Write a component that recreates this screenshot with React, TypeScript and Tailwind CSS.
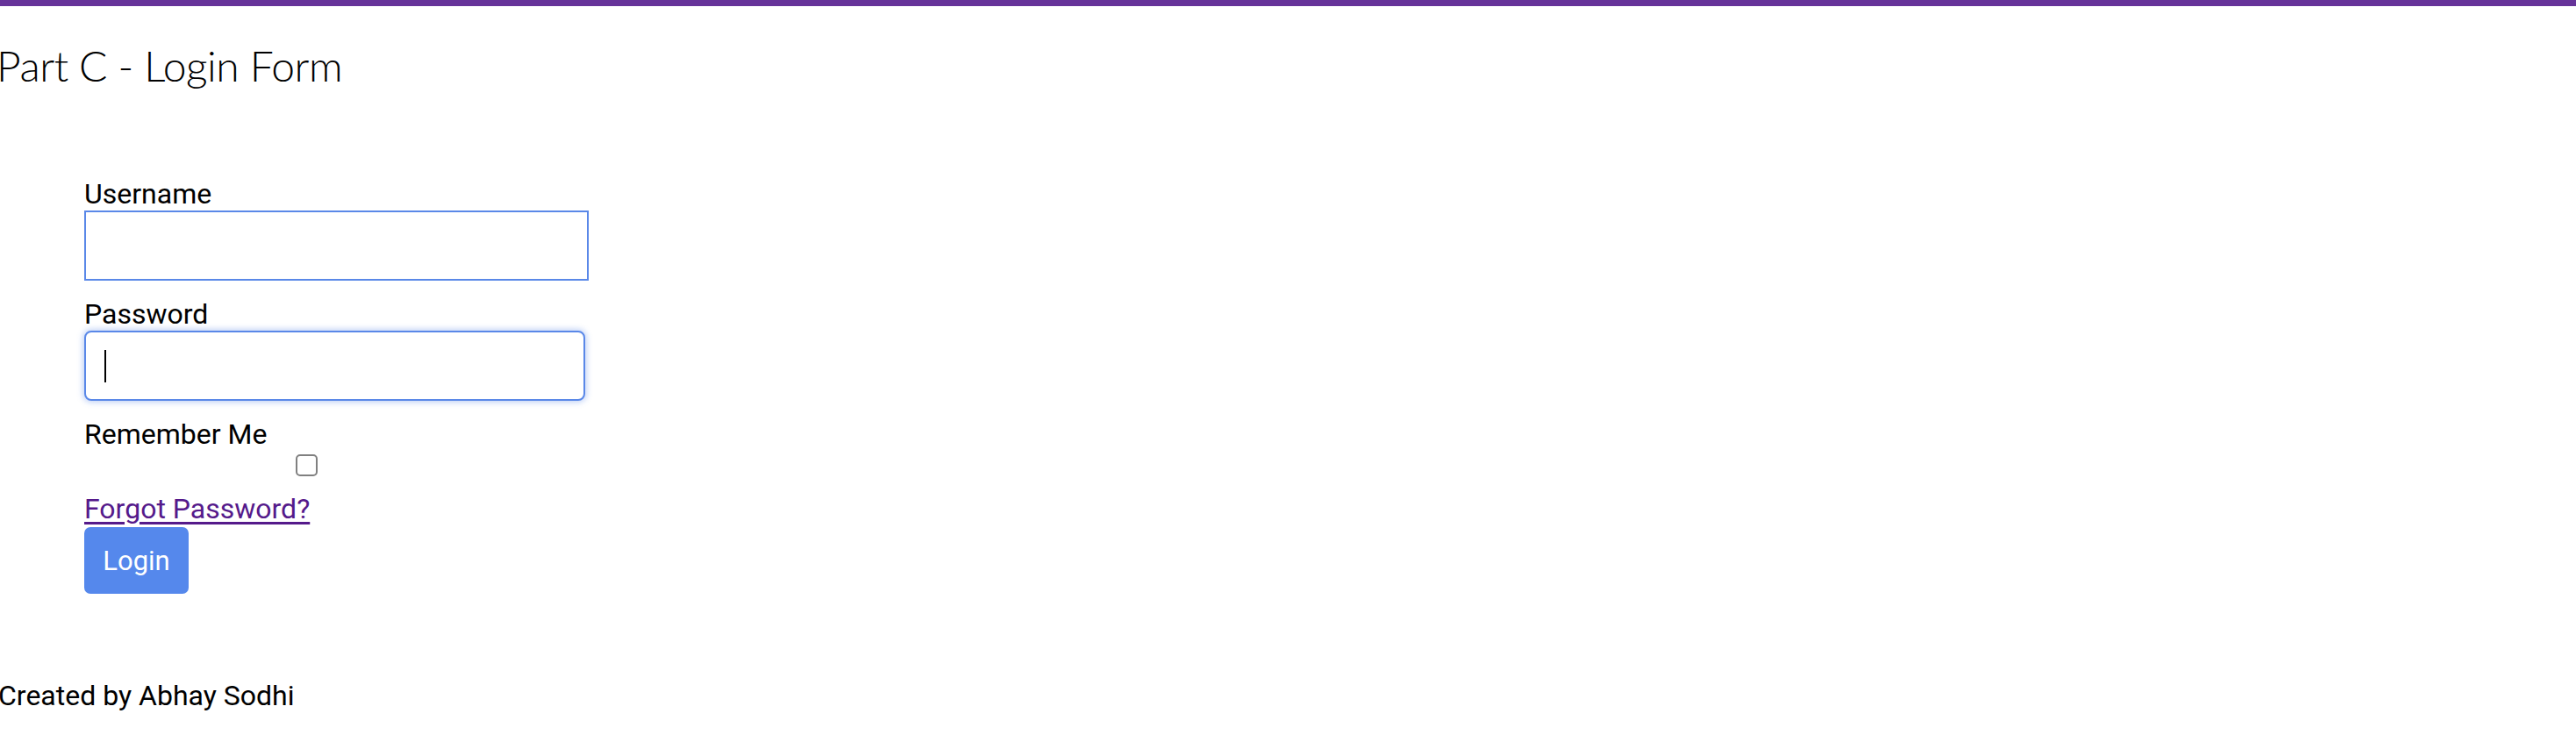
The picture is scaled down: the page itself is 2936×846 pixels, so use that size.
import React from "react";

const roboto = "font-['Roboto',_'Liberation_Sans',_sans-serif]";

export default function App() {
  return (
    <div className="min-h-screen bg-white text-black">
      <div className="h-[7px] w-full bg-[#663399]" />
      <h1 className="-ml-[4px] mt-[38px] font-['Lato',_'Open_Sans',_sans-serif] text-[48px] font-light leading-[60px] tracking-[-0.5px]">
        Part C - Login Form
      </h1>

      <form className={`ml-[96px] mt-[98px] flex flex-col ${roboto} text-[32px] leading-[37px]`}>
        <label htmlFor="username" className="block">
          Username
        </label>
        <input
          id="username"
          type="text"
          className="h-[80px] w-[575px] border-2 border-[#5a88e8] bg-white outline-none"
        />

        <label htmlFor="password" className="mt-[20px] block">
          Password
        </label>
        <div className="relative h-[80px] w-[571px] rounded-[8px] border-2 border-[#5a88e8] bg-white shadow-[0_0_6px_2px_rgba(90,136,232,0.35)]">
          <span className="absolute left-[21px] top-[20px] h-[37px] w-[2px] bg-black" />
        </div>

        <label htmlFor="remember" className="mt-[20px] block">
          Remember Me
        </label>
        <input
          id="remember"
          type="checkbox"
          className="ml-[241px] mt-[4px] h-[25px] w-[25px] appearance-none rounded-[5px] border-2 border-[#808080] bg-white"
        />

        <a href="#" className="mt-[19px] block w-fit text-[#551a8b] underline underline-offset-[4px]">
          Forgot Password?
        </a>
        <button
          type="button"
          className="mt-[2px] h-[76px] w-[119px] rounded-[7px] bg-[#5588ec] text-[31px] leading-[37px] text-white"
        >
          Login
        </button>
      </form>

      <p className={`-ml-[2px] mt-[98px] ${roboto} text-[32px] leading-[37px]`}>Created by Abhay Sodhi</p>
    </div>
  );
}
